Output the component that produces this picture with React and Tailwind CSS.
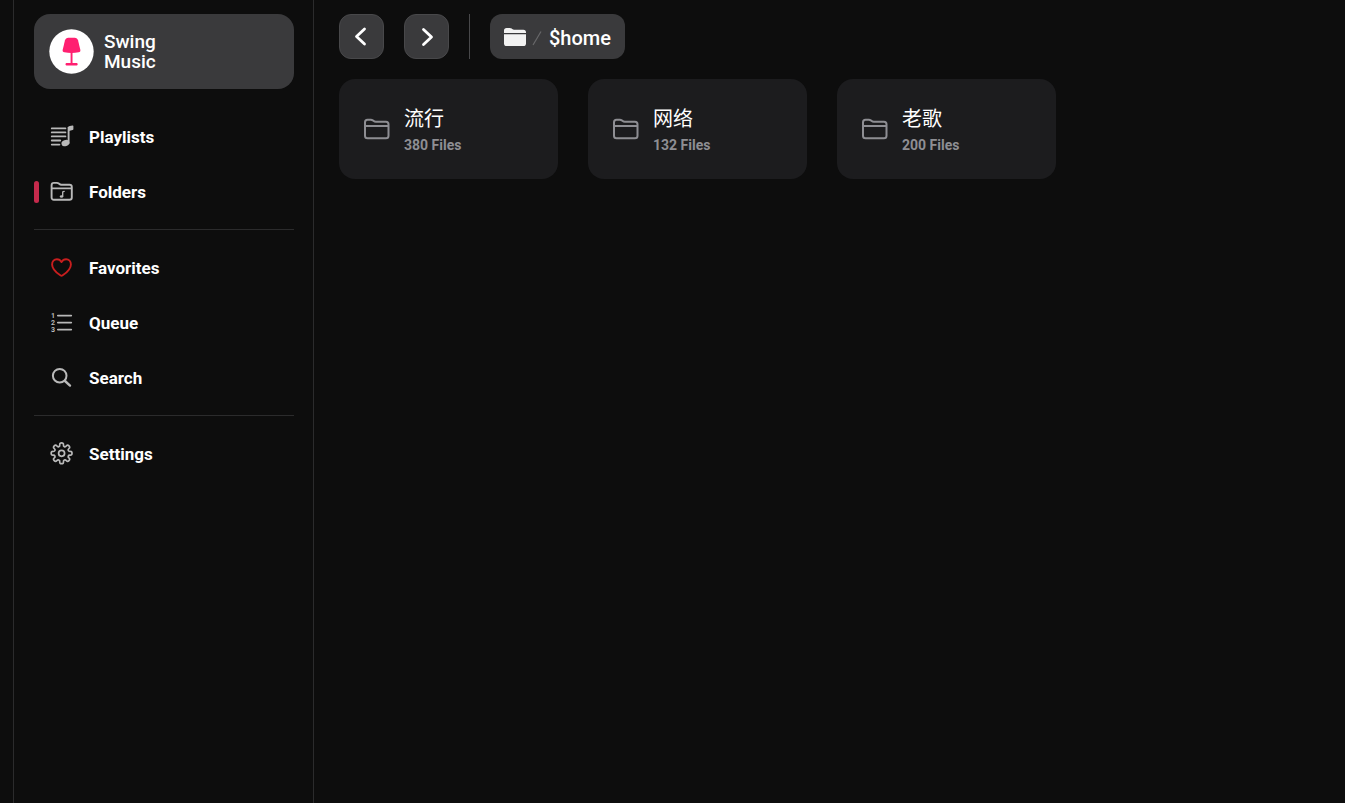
import React from 'react';

// eight rounded teeth: corner points joined by curves through their midpoints
const gearPath = (cx, cy, outer, inner) => {
  const points = [];
  for (let i = 0; i < 8; i++) {
    [[-13, inner], [-11, outer], [11, outer], [13, inner]].forEach(([offset, radius]) => {
      const angle = ((i * 45 + offset - 90) * Math.PI) / 180;
      points.push([cx + radius * Math.cos(angle), cy + radius * Math.sin(angle)]);
    });
  }
  const mid = (a, b) => `${((a[0] + b[0]) / 2).toFixed(2)} ${((a[1] + b[1]) / 2).toFixed(2)}`;
  const start = mid(points[points.length - 1], points[0]);
  const curves = points.map((p, i) => `Q${p[0].toFixed(2)} ${p[1].toFixed(2)} ${mid(p, points[(i + 1) % points.length])}`);
  return `M${start}${curves.join('')}Z`;
};

const NavIcon = ({ children, className = 'text-[#b9b9b9]' }) => (
  <svg
    viewBox="0 0 27 27"
    className={`size-[27px] shrink-0 ${className}`}
    fill="none"
    stroke="currentColor"
    strokeWidth="1.9"
    strokeLinecap="round"
    strokeLinejoin="round"
    aria-hidden="true"
  >
    {children}
  </svg>
);

const PlaylistIcon = () => (
  <NavIcon>
    <path d="M3.8 4.4h13.6M3.8 8.4h13.6M3.8 12.4h13.6M3.8 16.5h8.4M3.8 20.6h7.6" />
    <path d="M20.6 19V3.6" />
    <path d="M20 4.2c0-1.3.7-1.9 1.8-2.1l2.7-.6c.6-.1.9.1.9.7v2.9c0 .6-.3.9-.8 1L20 7.2z" fill="currentColor" stroke="none" />
    <ellipse cx="17.4" cy="19.1" rx="4" ry="3" fill="currentColor" stroke="none" transform="rotate(-20 17.4 19.1)" />
  </NavIcon>
);

const FolderNoteIcon = () => (
  <NavIcon>
    <path d="M3.6 18.4V6.2c0-1.5.8-2.3 2.3-2.3h3c.8 0 1.3.2 1.9.7l.6.5c.6.5 1.1.7 1.9.7h8.2c1.5 0 2.3.8 2.3 2.3v10.3c0 1.5-.8 2.3-2.3 2.3H5.9c-1.5 0-2.3-.8-2.3-2.3zM3.6 9.4h20.2" />
    <path d="M14.7 17.2v-4.4l1.5-.4" strokeWidth="1.3" />
    <ellipse cx="13.5" cy="17.5" rx="1.7" ry="1.3" fill="currentColor" stroke="none" />
  </NavIcon>
);

const HeartIcon = () => (
  <NavIcon className="text-[#c81e1e]">
    <path d="M13.5 20.9c-.4 0-.8-.3-1.2-.6C7.6 17.1 4.1 13.3 4.1 9.4c0-3.1 2.1-5.2 4.8-5.2 2 0 3.6 1.1 4.6 2.9 1-1.8 2.6-2.9 4.6-2.9 2.7 0 4.8 2.1 4.8 5.2 0 3.9-3.5 7.7-8.2 10.9-.4.3-.8.6-1.2.6z" />
  </NavIcon>
);

const QueueIcon = () => (
  <NavIcon>
    <path d="M9.9 5.6h13.3M9.9 12.6h13.3M9.9 19.6h13.3" />
    <g fill="currentColor" stroke="none" fontSize="7" fontWeight="700" textAnchor="middle" fontFamily="Roboto, sans-serif">
      <text x="5" y="8">1</text>
      <text x="5" y="15">2</text>
      <text x="5" y="22">3</text>
    </g>
  </NavIcon>
);

const SearchIcon = () => (
  <NavIcon>
    <circle cx="11.7" cy="10.7" r="6.8" strokeWidth="2" />
    <path d="M17 16l5 4.6" strokeWidth="2.4" />
  </NavIcon>
);

const SettingsIcon = () => (
  <NavIcon>
    <path d={gearPath(13.6, 12.3, 10.6, 7.3)} strokeWidth="1.7" />
    <circle cx="13.6" cy="12.3" r="3" strokeWidth="1.7" />
  </NavIcon>
);

const FolderIcon = () => (
  <svg viewBox="0 0 26 22" className="h-[22px] w-[26px] shrink-0 text-[#8e8e93]" fill="none" stroke="currentColor" strokeWidth="2" strokeLinejoin="round" aria-hidden="true">
    <path d="M1 17.7V4.2c0-1.6.9-2.5 2.5-2.5h3.3c.9 0 1.5.2 2.1.7l.8.6c.6.5 1.200.7 2.100.7H22c1.600 0 2.500.9 2.500 2.500v11.500c0 1.600-.9 2.500-2.500 2.500H3.500C1.900 20.200 1 19.300 1 17.700zM1 8h23.500" />
  </svg>
);

const LampLogo = () => (
  <svg viewBox="0 0 45 45" className="size-[45px] shrink-0" aria-hidden="true">
    <circle cx="22.5" cy="22.5" r="22.2" fill="#fff" />
    <path d="M19.3 8.8h6.4c1.7 0 2.8.9 3.3 2.5l2.3 9.4c.3 1.4-.2 2.2-1.6 2.5-4.7.9-9.7.9-14.4 0-1.4-.3-1.9-1.1-1.6-2.5L16 11.3c.5-1.6 1.6-2.5 3.3-2.5z" fill="#ff1f70" />
    <path d="M21.6 23h1.9v11h3.6c1 0 1.6.5 1.6 1.3s-.6 1.3-1.6 1.3h-9c-1 0-1.6-.5-1.6-1.3s.6-1.3 1.6-1.3h3.5z" fill="#ff1f70" />
  </svg>
);

const navGroups = [
  [
    { label: 'Playlists', icon: PlaylistIcon },
    { label: 'Folders', icon: FolderNoteIcon, active: true },
  ],
  [
    { label: 'Favorites', icon: HeartIcon },
    { label: 'Queue', icon: QueueIcon },
    { label: 'Search', icon: SearchIcon },
  ],
  [{ label: 'Settings', icon: SettingsIcon }],
];

const folders = [
  { name: '流行', count: 380 },
  { name: '网络', count: 132 },
  { name: '老歌', count: 200 },
];

const Sidebar = () => (
  <aside className="ml-[13px] w-[301px] shrink-0 border-x border-[#2b2b2c] pt-3.5 pr-[19px] pl-5">
    <a href="#home" className="flex items-center gap-2.5 rounded-2xl bg-[#3a3a3c] p-[15px]">
      <LampLogo />
      <span className="text-[19px] leading-5 font-medium">
        Swing
        <br />
        Music
      </span>
    </a>

    <nav className="pt-[26px]">
      {navGroups.map((group, i) => (
        <ul
          key={group[0].label}
          className={`flex flex-col gap-2.5 ${i > 0 ? 'mt-3.5 border-t border-[#2b2b2c] pt-4' : ''}`}
        >
          {group.map(({ label, icon: Icon, active }) => (
            <li key={label} className="relative">
              {active && <span className="absolute top-[11px] left-0 h-[22px] w-[5px] rounded-full bg-[#c52a4c]" />}
              <a
                href={`#${label.toLowerCase()}`}
                aria-current={active ? 'page' : undefined}
                className="flex h-[45px] items-center gap-3.5 pl-3.5 text-[17px] font-bold"
              >
                <Icon />
                {label}
              </a>
            </li>
          ))}
        </ul>
      ))}
    </nav>
  </aside>
);

const ArrowButton = ({ label, path }) => (
  <button
    type="button"
    aria-label={label}
    className="flex size-[45px] cursor-pointer items-center justify-center rounded-xl border border-[#48484a] bg-[#3a3a3c]"
  >
    <svg viewBox="0 0 24 24" className="size-6" fill="none" stroke="currentColor" strokeWidth="2.8" strokeLinecap="round" strokeLinejoin="round" aria-hidden="true">
      <path d={path} />
    </svg>
  </button>
);

const Toolbar = () => (
  <header className="flex h-[45px] gap-5">
    <ArrowButton label="Back" path="M14.5 4L6.5 11.5L14.5 19" />
    <ArrowButton label="Forward" path="M8.5 4.5L16.5 12L8.5 19.5" />
    <div className="w-px bg-[#48484a]" />
    <nav aria-label="Breadcrumb" className="flex items-center rounded-xl bg-[#3a3a3c] px-3.5">
      <a href="#root" aria-label="Root folder">
        <svg viewBox="0 0 22 20" className="h-5 w-[22px]" fill="#f2f2f2" aria-hidden="true">
          <path d="M0 6V3.5C0 1.8.9.9 2.6.9h3.2c.8 0 1.3.2 1.9.7l.5.4c.6.5 1.1.7 1.9.7h9.3C21.1 2.7 22 3.6 22 5.3V6z" />
          <path d="M0 7.3h22v9.1c0 1.7-.9 2.6-2.6 2.6H2.6C.9 19 0 18.1 0 16.4z" />
        </svg>
      </a>
      <svg viewBox="0 0 23 20" className="h-5 w-[23px]" stroke="#68686a" strokeWidth="1.2" aria-hidden="true">
        <path d="M7 18L15 4.5" />
      </svg>
      <a href="#home" className="pt-0.5 text-xl font-medium">$home</a>
    </nav>
  </header>
);

const FolderCard = ({ name, count }) => (
  <a href={`#${name}`} className="flex h-[100px] items-center gap-3.5 rounded-2xl bg-[#1c1c1e] px-[25px]">
    <FolderIcon />
    <span className="flex flex-col pt-1">
      <span className="text-xl leading-7">{name}</span>
      <span className="text-sm leading-6 font-bold text-[#8e8e93]">{count} Files</span>
    </span>
  </a>
);

const App = () => {
  return (
    <div
      className="flex min-h-screen bg-[#0d0d0d] text-white"
      style={{ fontFamily: 'Roboto, "Noto Sans CJK SC", sans-serif' }}
    >
      <Sidebar />
      <main className="min-w-0 flex-1 pt-3.5 pr-10 pl-[25px]">
        <Toolbar />
        <div className="mt-5 grid grid-cols-4 gap-[30px]">
          {folders.map((folder) => (
            <FolderCard key={folder.name} {...folder} />
          ))}
        </div>
      </main>
    </div>
  );
};

export default App;
